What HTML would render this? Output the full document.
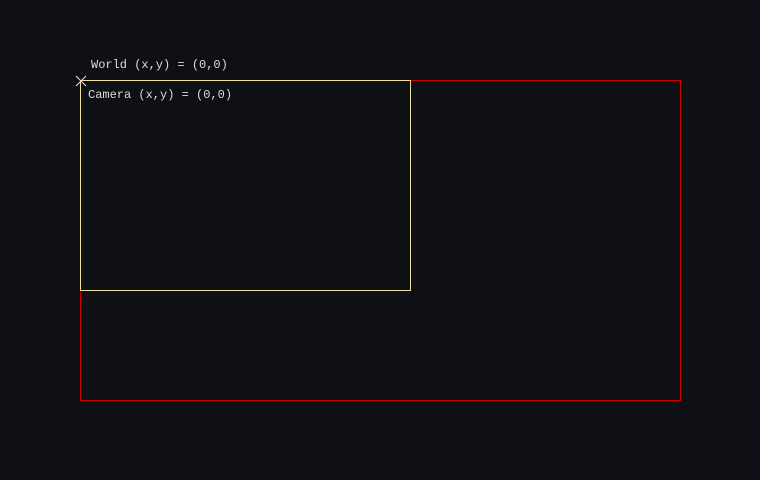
<!DOCTYPE html>
<html><head><style>
html,body{margin:0;padding:0;background:#0e1016;width:760px;height:480px;overflow:hidden;font-family:"Liberation Mono",monospace;}
.t{position:absolute;color:#dcdcdc;font-size:12px;line-height:14px;white-space:pre;}
.r{position:absolute;box-sizing:border-box;}
</style></head><body>
<div class="r" style="left:80px;top:80px;width:601px;height:321px;border:1px solid #d40000;"></div>
<div class="r" style="left:80px;top:80px;width:331px;height:211px;border:1px solid #f3dfa0;"></div>
<svg style="position:absolute;left:74px;top:74px" width="14" height="14"><path d="M2 2L12 12M12 2L2 12" stroke="#e8e8e8" stroke-width="1"/></svg>
<div class="t" style="left:91px;top:58px">World (x,y) = (0,0)</div>
<div class="t" style="left:88px;top:88px">Camera (x,y) = (0,0)</div>
</body></html>
